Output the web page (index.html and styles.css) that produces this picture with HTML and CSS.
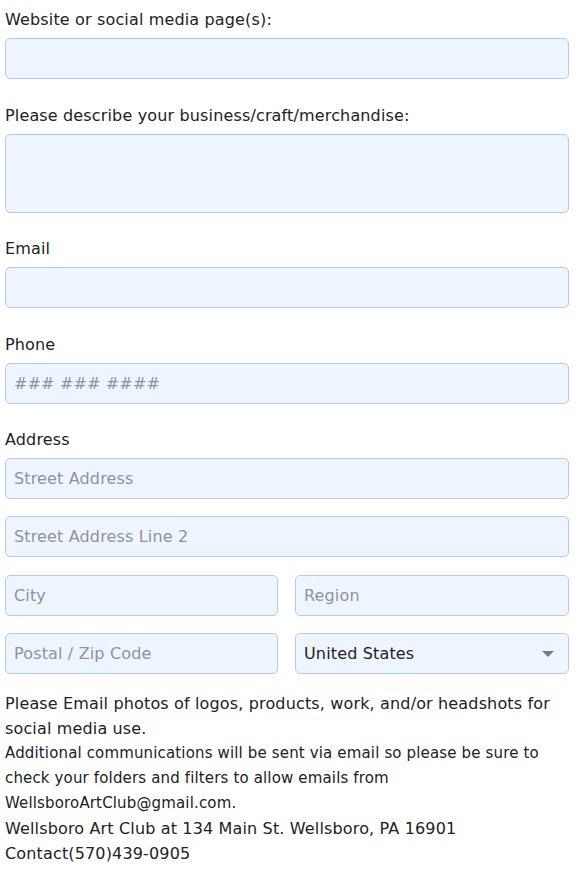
FILE: index.html
```html
<!DOCTYPE html>
<html lang="en">
<head>
<meta charset="utf-8">
<title>Vendor form</title>
<link rel="stylesheet" href="styles.css">
</head>
<body>
<form class="form">
  <div class="field">
    <label class="label">Website or social media page(s):</label>
    <input class="input" type="text">
  </div>
  <div class="field short">
    <label class="label">Please describe your business/craft/merchandise:</label>
    <textarea class="input textarea"></textarea>
  </div>
  <div class="field">
    <label class="label">Email</label>
    <input class="input" type="email">
  </div>
  <div class="field short">
    <label class="label">Phone</label>
    <input class="input" type="tel" placeholder="### ### ####">
  </div>
  <div class="field address">
    <label class="label">Address</label>
    <div class="address-rows">
      <input class="input" type="text" placeholder="Street Address">
      <input class="input" type="text" placeholder="Street Address Line 2">
      <div class="pair">
        <input class="input" type="text" placeholder="City">
        <input class="input" type="text" placeholder="Region">
      </div>
      <div class="pair">
        <input class="input" type="text" placeholder="Postal / Zip Code">
        <div class="select-wrap">
          <select class="input select">
            <option>United States</option>
          </select>
          <svg class="caret" width="12" height="6" viewBox="0 0 12 6"><path d="M0 0 L12 0 L6 6 Z" fill="#7a7a7a"/></svg>
        </div>
      </div>
    </div>
  </div>
  <div class="notes">
    <p class="note big">Please Email photos of logos, products, work, and/or headshots for social media use.</p>
    <p class="note small">Additional communications will be sent via email so please be sure to check your folders and filters to allow emails from WellsboroArtClub@gmail.com.</p>
    <p class="note big">Wellsboro Art Club at 134 Main St. Wellsboro, PA 16901</p>
    <p class="note big">Contact(570)439-0905</p>
  </div>
</form>
</body>
</html>
```

FILE: styles.css
```css
html, body {
  margin: 0;
  padding: 0;
  background: #ffffff;
}
body {
  font-family: "DejaVu Sans", "Open Sans", sans-serif;
  color: #222222;
  letter-spacing: 0.15px;
}
.form {
  width: 564px;
  padding: 8px 0 0 5px;
  display: flex;
  flex-direction: column;
}
.field {
  display: flex;
  flex-direction: column;
  gap: 6px;
  margin-bottom: 25px;
}
.field.short {
  margin-bottom: 24px;
}
.field.address {
  margin-bottom: 17px;
}
.label {
  font-size: 16px;
  line-height: 24px;
  height: 24px;
  color: #222;
}
.input {
  box-sizing: border-box;
  width: 100%;
  height: 41px;
  margin: 0;
  padding: 0 8px;
  border: 1px solid #abcdf6;
  border-radius: 5px;
  background: #eef5ff;
  font-family: inherit;
  font-size: 16px;
  letter-spacing: 0.15px;
  color: #222;
  outline: none;
}
.input::placeholder {
  color: #8f939b;
}
.textarea {
  height: 79px;
  resize: none;
  display: block;
}
.address-rows {
  display: flex;
  flex-direction: column;
  gap: 17.4px;
}
.pair {
  display: grid;
  grid-template-columns: 273px 274px;
  column-gap: 17px;
}
.select-wrap {
  position: relative;
}
.select {
  appearance: none;
  -webkit-appearance: none;
}
.caret {
  position: absolute;
  right: 15px;
  top: 18px;
  pointer-events: none;
}
.notes {
  display: flex;
  flex-direction: column;
}
.note {
  margin: 0;
  line-height: 25px;
}
.note.big {
  font-size: 16px;
}
.note.small {
  font-size: 15px;
}
```
